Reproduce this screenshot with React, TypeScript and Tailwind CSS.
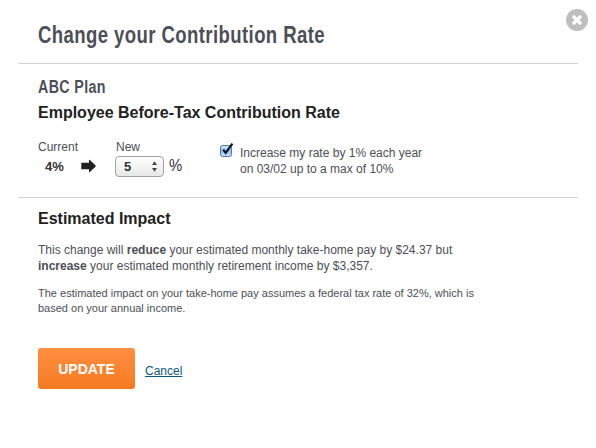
import { useState } from "react";

function CloseIcon() {
  return (
    <svg width="22" height="22" viewBox="0 0 22 22" className="block">
      <circle cx="11" cy="11" r="11" fill="#bfbfbf" />
      <path d="M7 7 L15 15 M15 7 L7 15" stroke="#fff" strokeWidth="3.2" />
    </svg>
  );
}

function ArrowIcon() {
  return (
    <svg width="15" height="14" viewBox="0 0 15 14" className="-mt-[2px] block">
      <path d="M0.3 3.8 H8 V1.2 Q8.2 0.6 8.9 1 L14.6 6.4 Q15 7 14.6 7.6 L8.9 13 Q8.2 13.4 8 12.8 V10.2 H0.3 Z" fill="#222" />
    </svg>
  );
}

function Checkbox({ checked, onToggle }: { checked: boolean; onToggle: () => void }) {
  return (
    <button type="button" role="checkbox" aria-checked={checked} aria-label="Increase yearly" onClick={onToggle} className="block h-[16px] w-[14px]">
      <svg width="14" height="16" viewBox="0 0 14 16" className="block">
        <defs>
          <linearGradient id="box" x1="0" y1="0" x2="0" y2="1">
            <stop offset="0" stopColor="#dbeafb" />
            <stop offset="0.5" stopColor="#8fc0f2" />
            <stop offset="1" stopColor="#c4e6fd" />
          </linearGradient>
        </defs>
        <rect x="0.5" y="3.5" width="11" height="11" rx="2" fill="url(#box)" stroke="#5872a3" />
        {checked && <path d="M3.2 7.6 L5.7 10.9 L12.4 1.6" fill="none" stroke="#0c1424" strokeWidth="2.2" />}
      </svg>
    </button>
  );
}

export default function App() {
  const [yearly, setYearly] = useState(true);
  return (
    <div className="relative h-[448px] w-[596px] overflow-hidden bg-white pl-[18px] pr-[18px] font-['Liberation_Sans',Arial,sans-serif] text-xs text-[#4b4f56]">
      <button type="button" aria-label="Close" className="absolute left-[566px] top-[9px]">
        <CloseIcon />
      </button>

      <header className="h-16 border-b border-[#d3d3d3] pl-5 pt-[21px]">
        <h1 className="origin-left scale-x-[0.807] whitespace-nowrap text-[23px] font-bold leading-7 tracking-[0.5px] text-[#4b4f58]">
          Change your Contribution Rate
        </h1>
      </header>

      <section className="h-[134px] border-b border-[#d3d3d3] pl-5 pt-[12px]">
        <h2 className="origin-left scale-x-[0.79] whitespace-nowrap text-[18px] font-bold leading-[22px] tracking-[0.5px] text-[#4b4f58]">ABC Plan</h2>
        <h3 className="mt-[5px] text-base font-bold leading-5 text-[#222]">Employee Before-Tax Contribution Rate</h3>

        <div className="mt-4 flex">
          <div className="w-[77px]">
            <div className="leading-4">Current</div>
            <div className="mt-1 flex items-center pl-[7px]">
              <span className="w-9 text-[13px] font-bold leading-4 text-[#333]">4%</span>
              <ArrowIcon />
            </div>
          </div>
          <div className="w-[105px]">
            <div className="pl-px leading-4">New</div>
            <div className="mt-px flex items-center">
              <button type="button" className="flex h-[21px] w-[49px] items-center justify-between rounded-[4px] border border-[#a0a0a0] bg-linear-to-b from-white to-[#e8e8e8] pl-2 pr-[6px]">
                <span className="text-[13px] font-bold leading-4 text-[#333]">5</span>
                <svg width="5" height="11" viewBox="0 0 5 11">
                  <path d="M0 4 L2.5 0.3 L5 4 Z M0 7 L2.5 10.7 L5 7 Z" fill="#444" />
                </svg>
              </button>
              <span className="-mt-[2px] ml-[5px] origin-left scale-x-[0.93] text-base leading-5 text-[#333]">%</span>
            </div>
          </div>
          <div className="flex pt-[3px]">
            <Checkbox checked={yearly} onToggle={() => setYearly(!yearly)} />
            <p className="ml-[6px] mt-[3px] leading-4">
              Increase my rate by 1% each year
              <br />
              on 03/02 up to a max of 10%
            </p>
          </div>
        </div>
      </section>

      <section className="pl-5 pt-[11px]">
        <h3 className="text-base font-bold leading-5 text-[#222]">Estimated Impact</h3>
        <p className="mt-[13px] leading-4">
          This change will <b>reduce</b> your estimated monthly take-home pay by $24.37 but
          <br />
          <b>increase</b> your estimated monthly retirement income by $3,357.
        </p>
        <p className="mt-3 text-[11px] leading-[15px]">
          The estimated impact on your take-home pay assumes a federal tax rate of 32%, which is
          <br />
          based on your annual income.
        </p>
        <div className="mt-8 flex items-center">
          <button type="button" className="h-[41px] w-[97px] rounded-[3px] bg-linear-to-b from-[#ff8f3f] to-[#f47a20] text-sm font-bold text-white">
            UPDATE
          </button>
          <a href="#" className="ml-[10px] mt-1 leading-4 text-[#0b5878] underline">Cancel</a>
        </div>
      </section>
    </div>
  );
}
